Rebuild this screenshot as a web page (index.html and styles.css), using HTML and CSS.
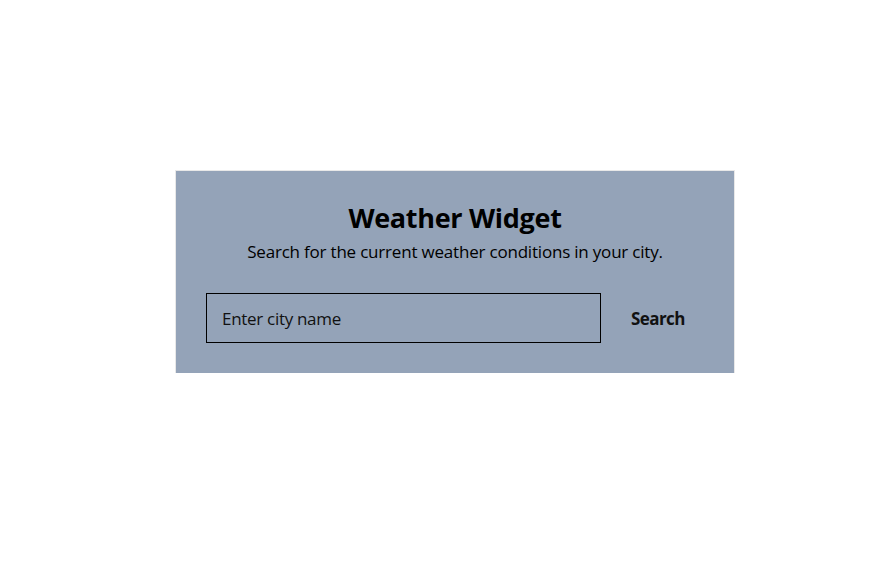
FILE: index.html
```html
<!DOCTYPE html>
<html lang="en">
<head>
<meta charset="utf-8">
<title>Weather Widget</title>
<link rel="stylesheet" href="styles.css">
</head>
<body>
<main class="page">
  <section class="card">
    <h1 class="title">Weather Widget</h1>
    <p class="subtitle">Search for the current weather conditions in your city.</p>
    <form class="search">
      <input class="city" type="text" placeholder="Enter city name">
      <button class="go" type="button">Search</button>
    </form>
  </section>
</main>
</body>
</html>
```
FILE: styles.css
```css
html, body {
  margin: 0;
  padding: 0;
  background: #ffffff;
}
body {
  font-family: "Open Sans", "Noto Sans", sans-serif;
  color: #000;
}
.page {
  padding: 171px 0 0 176px;
}
.card {
  box-sizing: border-box;
  width: 558px;
  height: 202px;
  background: #94a3b8;
  box-shadow: 0 0 0 1px #e8e8e8;
  padding: 29px 30px 30px 30px;
  display: flex;
  flex-direction: column;
  align-items: stretch;
}
.title {
  margin: 0;
  font-size: 27px;
  font-weight: 700;
  line-height: 36px;
  text-align: center;
  letter-spacing: -0.3px;
}
.subtitle {
  margin: 4px 0 0 0;
  font-size: 17px;
  line-height: 24px;
  text-align: center;
  letter-spacing: -0.2px;
}
.search {
  margin-top: auto;
  display: flex;
  align-items: center;
}
.city {
  box-sizing: border-box;
  width: 395px;
  height: 50px;
  border: 1px solid #000;
  background: transparent;
  padding: 0 15px;
  font-family: inherit;
  font-size: 17px;
  letter-spacing: -0.3px;
  color: #000;
  outline: none;
}
.city::placeholder {
  color: #111;
  opacity: 1;
}
.go {
  border: 0;
  background: transparent;
  padding: 0 0 0 30px;
  font-family: inherit;
  font-size: 17px;
  font-weight: 700;
  letter-spacing: -0.6px;
  color: #111;
  cursor: pointer;
}
```
